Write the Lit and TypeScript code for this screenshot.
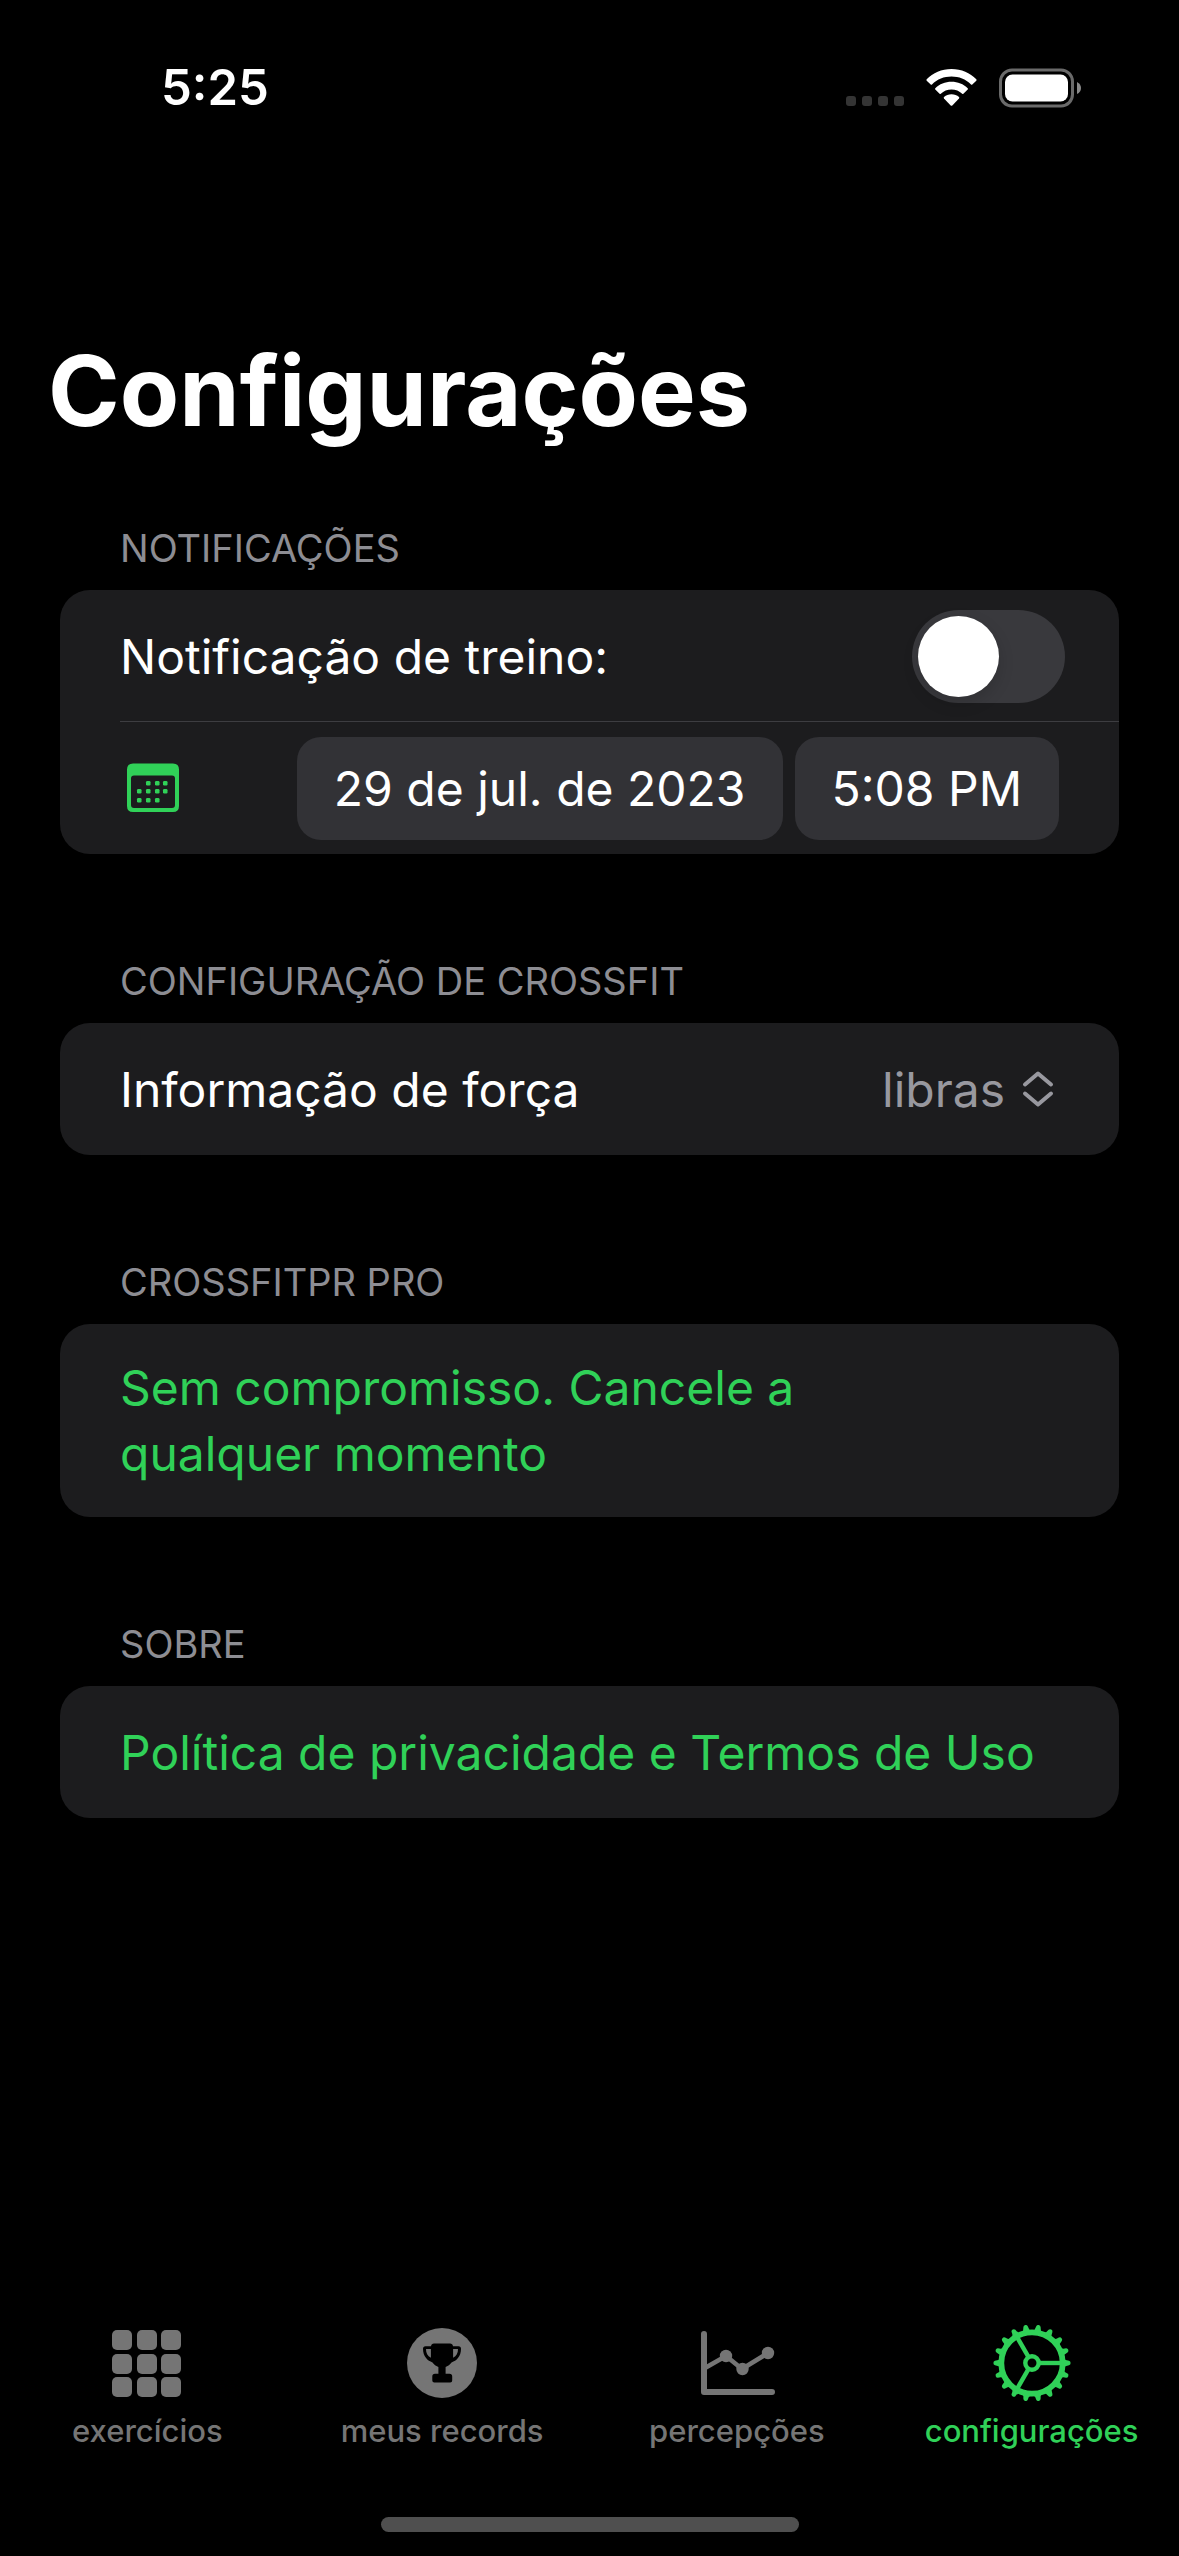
import { LitElement, html, css, svg } from "lit";
import { customElement, property, state } from "lit/decorators.js";
import { classMap } from "lit/directives/class-map.js";

const gridIcon = svg`
  <svg viewBox="0 0 80 80" width="80" height="80" fill="currentColor" aria-hidden="true">
    ${[5, 30, 54].map((x) =>
      [7, 31, 54].map(
        (y) => svg`<rect x=${x} y=${y} width="20" height="20" rx="5"></rect>`
      )
    )}
  </svg>`;

const trophyIcon = svg`
  <svg viewBox="0 0 80 80" width="80" height="80" aria-hidden="true">
    <circle cx="40" cy="40" r="35" fill="currentColor"></circle>
    <path
      fill="#000"
      d="M32 20.500H48Q50.600 20.500 51 23.200H56.500Q59 23.200 59 25.800C59 33.500 54.500 37.800 49.500 39.400C47.500 42 45.500 43 43.600 44V50.800H47.500Q50.200 50.800 50.200 53.500V57.500Q50.200 59.500 48.200 59.500H32.300Q30.300 59.500 30.300 57.500V53.500Q30.300 50.800 33 50.800H36.400V44C34.500 43 32.500 42 30.500 39.400C25.500 37.800 21 33.500 21 25.800Q21 23.200 23.500 23.200H29Q29.400 20.500 32 20.500Z"
    ></path>
    <path
      fill="currentColor"
      d="M24 26H28.900V34.800C25.500 33.200 23.900 29.800 24 26ZM56 26H51.100V34.800C54.500 33.200 56.100 29.800 56 26Z"
    ></path>
  </svg>`;

const chartIcon = svg`
  <svg viewBox="0 0 80 80" width="80" height="80" fill="none" stroke="currentColor" aria-hidden="true">
    <path d="M7 11V69H75" stroke-width="6" stroke-linecap="round" stroke-linejoin="round"></path>
    <path d="M8 45L29 33L45 46L71 30" stroke-width="4.600"></path>
    <g fill="currentColor" stroke="none">
      <circle cx="29" cy="33" r="6.200"></circle>
      <circle cx="45.500" cy="46" r="6.200"></circle>
      <circle cx="71" cy="30" r="6.200"></circle>
    </g>
  </svg>`;

const gearTeeth = Array.from({ length: 18 }, (_, i) => i * 20);
const gearIcon = svg`
  <svg viewBox="0 0 80 80" width="80" height="80" fill="none" stroke="currentColor" aria-hidden="true">
    <circle cx="40" cy="40" r="30.700" stroke-width="5.800"></circle>
    <circle cx="40" cy="40" r="6.700" stroke-width="4.400"></circle>
    ${[0, 120, 240].map(
      (a) => svg`<path d="M48 40H69" stroke-width="4.400" transform="rotate(${a} 40 40)"></path>`
    )}
    ${gearTeeth.map(
      (a) => svg`<path
        fill="currentColor" stroke="none" transform="rotate(${a} 40 40)"
        d="M71 34.800Q73 37.400 77 37.800Q78.600 38.200 78.600 40Q78.600 41.800 77 42.200Q73 42.600 71 45.200Z"></path>`
    )}
  </svg>`;

const calendarIcon = svg`
  <svg viewBox="0 0 54 50" width="54" height="50" fill="currentColor" role="img" aria-label="Data">
    <path
      fill-rule="evenodd"
      d="M7 0.500H47Q53 0.500 53 6.500V43Q53 49 47 49H7Q1 49 1 43V6.500Q1 0.500 7 0.500ZM8 12.500Q5 12.500 5 15.500V42Q5 45 8 45H46Q49 45 49 42V15.500Q49 12.500 46 12.500Z"
    ></path>
    ${[
      [22, 20], [31, 20], [39, 20],
      [13, 28], [22, 28], [31, 28], [39, 28],
      [13, 37], [22, 37], [31, 37],
    ].map(([x, y]) => svg`<rect x=${x - 2} y=${y - 2} width="4.500" height="4.500" rx="1.200"></rect>`)}
  </svg>`;

@customElement("status-bar")
class StatusBar extends LitElement {
  static styles = css`
    :host {
      display: block;
    }
    .bar {
      display: flex;
      align-items: center;
      justify-content: space-between;
      padding: 58px 98px 58px 161px;
    }
    .time {
      font-size: 49px;
      line-height: 60px;
      font-weight: 600;
    }
    .signals {
      display: flex;
      align-items: center;
      gap: 22px;
    }
  `;

  render() {
    return html`
      <div class="bar">
        <span class="time">5:25</span>
        <div class="signals">
          <svg viewBox="0 0 58 40" width="58" height="40" fill="#343434" aria-hidden="true">
            ${[0, 16, 32, 48].map(
              (x) => svg`<rect x=${x} y="28" width="10" height="10" rx="3"></rect>`
            )}
          </svg>
          <svg viewBox="0 0 51 40" width="51" height="40" fill="#fff" aria-hidden="true">
            <path d="M25.500 1C35.500 1 44 5 50.300 11.300Q50.900 12 50.300 12.700L46.300 16.500Q45.700 17 45 16.400C39.700 11.300 33 8.600 25.500 8.600S11.300 11.300 6 16.400Q5.300 17 4.700 16.500L0.700 12.700Q0.100 12 0.700 11.300C7 5 15.500 1 25.500 1Z"></path>
            <path d="M25.500 13.700C31.800 13.700 37.500 16 41.700 20.200Q42.300 20.900 41.700 21.500L37.400 25.700Q36.800 26.200 36.200 25.700C33.300 23 29.700 21.500 25.500 21.500S17.700 23 14.800 25.700Q14.200 26.200 13.600 25.700L9.300 21.500Q8.700 20.900 9.300 20.200C13.500 16 19.200 13.700 25.500 13.700Z"></path>
            <path d="M25.500 26.300C28.400 26.300 31 27.300 33 29Q33.600 29.700 33 30.400L26.300 37.400Q25.500 38.100 24.700 37.400L18 30.400Q17.400 29.700 18 29C20 27.300 22.600 26.300 25.500 26.300Z"></path>
          </svg>
          <svg viewBox="0 0 82 40" width="82" height="40" aria-hidden="true">
            <rect x="1.500" y="2" width="72" height="36" rx="11.500" fill="none" stroke="#6a6a6a" stroke-width="3"></rect>
            <rect x="6" y="6.500" width="63" height="27" rx="7.500" fill="#fff"></rect>
            <path d="M78 14Q82 16 82 20T78 26Z" fill="#8a8a8a"></path>
          </svg>
        </div>
      </div>
    `;
  }
}

@customElement("settings-section")
class SettingsSection extends LitElement {
  static styles = css`
    :host {
      display: block;
    }
    .heading {
      margin: 0;
      padding: 0 60px 18px;
      font-size: 38px;
      line-height: 48px;
      font-weight: 400;
      color: #8d8d93;
    }
    .card {
      border-radius: 30px;
      background: #1c1c1e;
      overflow: hidden;
    }
  `;

  @property() heading = "";

  render() {
    return html`
      <section>
        <h2 class="heading">${this.heading}</h2>
        <div class="card"><slot></slot></div>
      </section>
    `;
  }
}

@customElement("tab-bar")
class TabBar extends LitElement {
  static styles = css`
    :host {
      display: block;
    }
    .tabs {
      display: grid;
      grid-template-columns: repeat(4, 1fr);
    }
    .tab {
      display: flex;
      flex-direction: column;
      align-items: center;
      gap: 10px;
      padding: 0;
      border: 0;
      background: none;
      color: #757575;
      font: inherit;
      font-size: 31px;
      line-height: 36px;
      font-weight: 500;
    }
    .active {
      color: #30d158;
    }
    .home {
      width: 418px;
      height: 15px;
      margin: 68px auto 24px;
      border-radius: 8px;
      background: #4f4f4f;
    }
  `;

  @state() private active = 3;

  private tabs = [
    { label: "exercícios", icon: gridIcon },
    { label: "meus records", icon: trophyIcon },
    { label: "percepções", icon: chartIcon },
    { label: "configurações", icon: gearIcon },
  ];

  render() {
    return html`
      <nav class="tabs">
        ${this.tabs.map(
          (tab, i) => html`
            <button
              class=${classMap({ tab: true, active: i === this.active })}
              aria-current=${i === this.active ? "page" : "false"}
              @click=${() => (this.active = i)}
            >
              ${tab.icon}<span>${tab.label}</span>
            </button>
          `
        )}
      </nav>
      <div class="home"></div>
    `;
  }
}

@customElement("app-root")
class AppRoot extends LitElement {
  static styles = css`
    :host {
      display: block;
      background: #000;
      color: #fff;
      font-family: Inter, "Liberation Sans", sans-serif;
    }
    .screen {
      display: flex;
      flex-direction: column;
      min-height: 100vh;
    }
    .title {
      margin: 0;
      padding: 155px 48px 73px;
      font-size: 97px;
      line-height: 120px;
      font-weight: 700;
    }
    .sections {
      display: flex;
      flex-direction: column;
      gap: 103px;
      padding: 0 60px;
    }
    .row {
      display: flex;
      align-items: center;
      box-sizing: border-box;
      min-height: 132px;
      padding: 0 60px;
      font-size: 48px;
      line-height: 67px;
    }
    .label {
      flex: 1;
    }
    .switch {
      appearance: none;
      box-sizing: border-box;
      width: 153px;
      height: 93px;
      margin: 0 -6px 0 0;
      padding: 6px;
      border-radius: 47px;
      background: #39393d;
    }
    .switch::before {
      content: "";
      display: block;
      width: 81px;
      height: 81px;
      border-radius: 50%;
      background: #fff;
      box-shadow: 0 6px 16px rgba(0, 0, 0, 0.15);
    }
    .switch:checked {
      background: #30d158;
    }
    .switch:checked::before {
      margin-left: auto;
    }
    .divider {
      height: 1px;
      margin: -1px 0 0 60px;
      border: 0;
      background: #3d3d41;
    }
    .date-row {
      gap: 12px;
      color: #30d158;
    }
    .date-icon {
      display: flex;
      flex: 1;
      padding-left: 6px;
    }
    .pill {
      padding: 18px 37px;
      border: 0;
      border-radius: 24px;
      background: #323236;
      color: #fff;
      font: inherit;
    }
    .unit {
      display: flex;
      align-items: center;
      gap: 16px;
      padding-right: 4px;
      color: #98989f;
    }
    .select {
      appearance: none;
      padding: 0;
      border: 0;
      background: none;
      color: inherit;
      font: inherit;
      text-align: right;
      text-align-last: right;
    }
    .action {
      width: 100%;
      padding: 31px 60px 30px;
      border: 0;
      background: none;
      color: #30d158;
      font: inherit;
      font-size: 48px;
      line-height: 66px;
      text-align: left;
    }
    .action-text {
      display: block;
      max-width: 80%;
    }
    .link {
      color: #30d158;
      text-decoration: none;
    }
    .tabs {
      margin-top: auto;
    }
  `;

  render() {
    return html`
      <div class="screen">
        <status-bar></status-bar>
        <main>
          <h1 class="title">Configurações</h1>
          <div class="sections">
            <settings-section heading="NOTIFICAÇÕES">
              <div class="row">
                <label class="label" for="training">Notificação de treino:</label>
                <input class="switch" id="training" type="checkbox" role="switch" />
              </div>
              <hr class="divider" />
              <div class="row date-row">
                <span class="date-icon">${calendarIcon}</span>
                <button class="pill">29 de jul. de 2023</button>
                <button class="pill">5:08 PM</button>
              </div>
            </settings-section>
            <settings-section heading="CONFIGURAÇÃO DE CROSSFIT">
              <div class="row">
                <label class="label" for="unit">Informação de força</label>
                <span class="unit">
                  <select class="select" id="unit">
                    <option>libras</option>
                  </select>
                  <svg viewBox="0 0 34 38" width="34" height="38" fill="none" stroke="currentColor" stroke-width="4" stroke-linecap="round" stroke-linejoin="round" aria-hidden="true">
                    <path d="M4 14.500L17 3.500L30 14.500M4 23.500L17 34.500L30 23.500"></path>
                  </svg>
                </span>
              </div>
            </settings-section>
            <settings-section heading="CROSSFITPR PRO">
              <button class="action">
                <span class="action-text">Sem compromisso. Cancele a qualquer momento</span>
              </button>
            </settings-section>
            <settings-section heading="SOBRE">
              <a class="row link" href="#termos">Política de privacidade e Termos de Uso</a>
            </settings-section>
          </div>
        </main>
        <tab-bar class="tabs"></tab-bar>
      </div>
    `;
  }
}
